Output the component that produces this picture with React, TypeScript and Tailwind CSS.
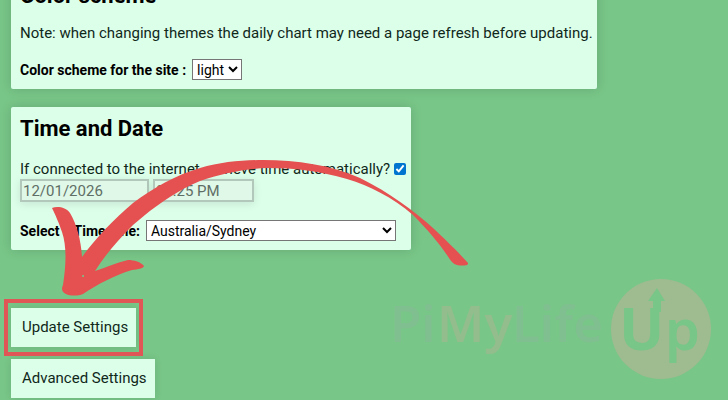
import React, { useState } from "react";

const CARD = "rounded-xs bg-[#dcffea] pr-1 pl-[9px] shadow-[0_0_12px_rgba(0,0,0,0.15)]";
const HEADING = "text-[22px] leading-7 font-bold text-black";
const LABEL = "text-[14px] font-bold text-black";
const SELECT = "h-[21px] border border-[#767676] bg-white text-[14px] text-black";
const BUTTON = "block bg-[#dcffea] py-2 pr-2 pl-[11px] text-[15px] leading-[23px] text-[#10281a] shadow-[0_0_8px_rgba(0,0,0,0.1)]";
const FIELD = "h-[23px] border-2 border-[#b2c8ba] bg-[#dff8e8] px-px text-[15px] text-[#5f6e65] shadow-[0_2px_8px_rgba(0,0,0,0.1)]";

// ---------------- WATERMARK ----------------
const Watermark = () => (
  <svg
    className="pointer-events-none absolute right-4 bottom-5 h-[102px] w-[322px]"
    viewBox="0 0 322 102"
    role="img"
    aria-label="PiMyLifeUp"
  >
    <g fontFamily="'Noto Sans', sans-serif" fontWeight="600" fontSize="51">
      <text x="0" y="64" fill="#80bf8f">Pi</text>
      <text x="47" y="64" fill="#93bd8c">My</text>
      <text x="122" y="64" fill="#80bf8f">Life</text>
    </g>
    <circle cx="271" cy="51" r="50" fill="#9fbb90" />
    <g fontFamily="'Noto Sans', sans-serif" fill="#78c688">
      <text x="229" y="72" fontSize="60" fontWeight="700">U</text>
      <text x="275" y="72" fontSize="56" fontWeight="600">p</text>
    </g>
    <path d="M263 34V23h-5l9-13 8 13h-4v11z" fill="#78c688" />
  </svg>
);

// ---------------- ARROW ----------------
const Arrow = () => (
  <svg
    className="pointer-events-none absolute top-0 left-0 h-[400px] w-[728px]"
    viewBox="0 0 728 400"
    aria-hidden="true"
  >
    <path
      fill="#e55050"
      fillRule="evenodd"
      d="M52 208C57 206 66 207 70 213C77 225 81 240 82 257
         C96 238 113 220 133 203C153 188 176 175 200 168
         C221 162 242 160 263 160C297 160 331 165 360 178
         C390 193 413 210 433 228C447 241 460 254 468 263
         C469 266 461 266 457 265C453 264 451 261 449 258
         C440 244 427 229 413 215C392 197 370 186 347 179
         C320 171 294 168 267 168C243 169 221 174 200 181
         C174 192 154 207 133 225C118 240 105 255 95 271
         C107 267 119 262 128 260C134 260 141 262 144 266
         C143 269 138 269 132 270C115 275 98 284 83 294
         C78 296 70 296 66 294C62 292 61 289 63 285
         C66 265 67 247 62 232C59 223 55 214 52 208Z
         M83 275a1 1 0 1 0 .1 2a1 1 0 1 0-.1-2Z"
    />
  </svg>
);

const App = () => {
  const [scheme, setScheme] = useState("light");
  const [timezone, setTimezone] = useState("Australia/Sydney");
  const [autoTime, setAutoTime] = useState(true);

  return (
    <div className="relative min-h-screen overflow-hidden bg-[#78c688] px-[11px] font-[Roboto,sans-serif] text-[15px] leading-5 text-[#10281a]">
      <section className={`${CARD} -mt-[18px] w-fit pb-[9px]`}>
        <h2 className={HEADING}>Color scheme</h2>
        <p className="mt-[13px]">
          Note: when changing themes the daily chart may need a page refresh before updating.
        </p>
        <div className="mt-4 flex items-center gap-1.5">
          <label htmlFor="scheme" className={LABEL}>Color scheme for the site :</label>
          <select
            id="scheme"
            className={SELECT}
            value={scheme}
            onChange={(e) => setScheme(e.target.value)}
          >
            <option>light</option>
            <option>dark</option>
          </select>
        </div>
      </section>

      <section className={`${CARD} mt-[18px] w-[400px] max-w-full pt-2 pb-[9px]`}>
        <h2 className={HEADING}>Time and Date</h2>
        <div className="mt-4 flex items-center gap-1">
          <label htmlFor="auto">If connected to the internet, retrieve time automatically?</label>
          <input
            id="auto"
            type="checkbox"
            className="size-3 accent-[#0075d0]"
            checked={autoTime}
            onChange={(e) => setAutoTime(e.target.checked)}
          />
        </div>
        <div className="flex gap-1">
          <input aria-label="Date" className={`${FIELD} w-[129px]`} defaultValue="12/01/2026" readOnly />
          <input aria-label="Time" className={`${FIELD} w-[101px]`} defaultValue="03:25 PM" readOnly />
        </div>
        <div className="mt-[18px] flex items-center gap-1.5">
          <label htmlFor="zone" className={LABEL}>Select a Timezone:</label>
          <select
            id="zone"
            className={`${SELECT} w-[250px]`}
            value={timezone}
            onChange={(e) => setTimezone(e.target.value)}
          >
            <option>Australia/Sydney</option>
            <option>Australia/Perth</option>
          </select>
        </div>
      </section>

      <div className="mt-[58px] flex flex-col items-start gap-3">
        <div className="relative">
          <button type="button" className={BUTTON}>Update Settings</button>
          <span className="pointer-events-none absolute -inset-x-[7px] -inset-y-[9px] border-4 border-[#e05555]" />
        </div>
        <button type="button" className={BUTTON}>Advanced Settings</button>
      </div>

      <Watermark />
      <Arrow />
    </div>
  );
};

export default App;
